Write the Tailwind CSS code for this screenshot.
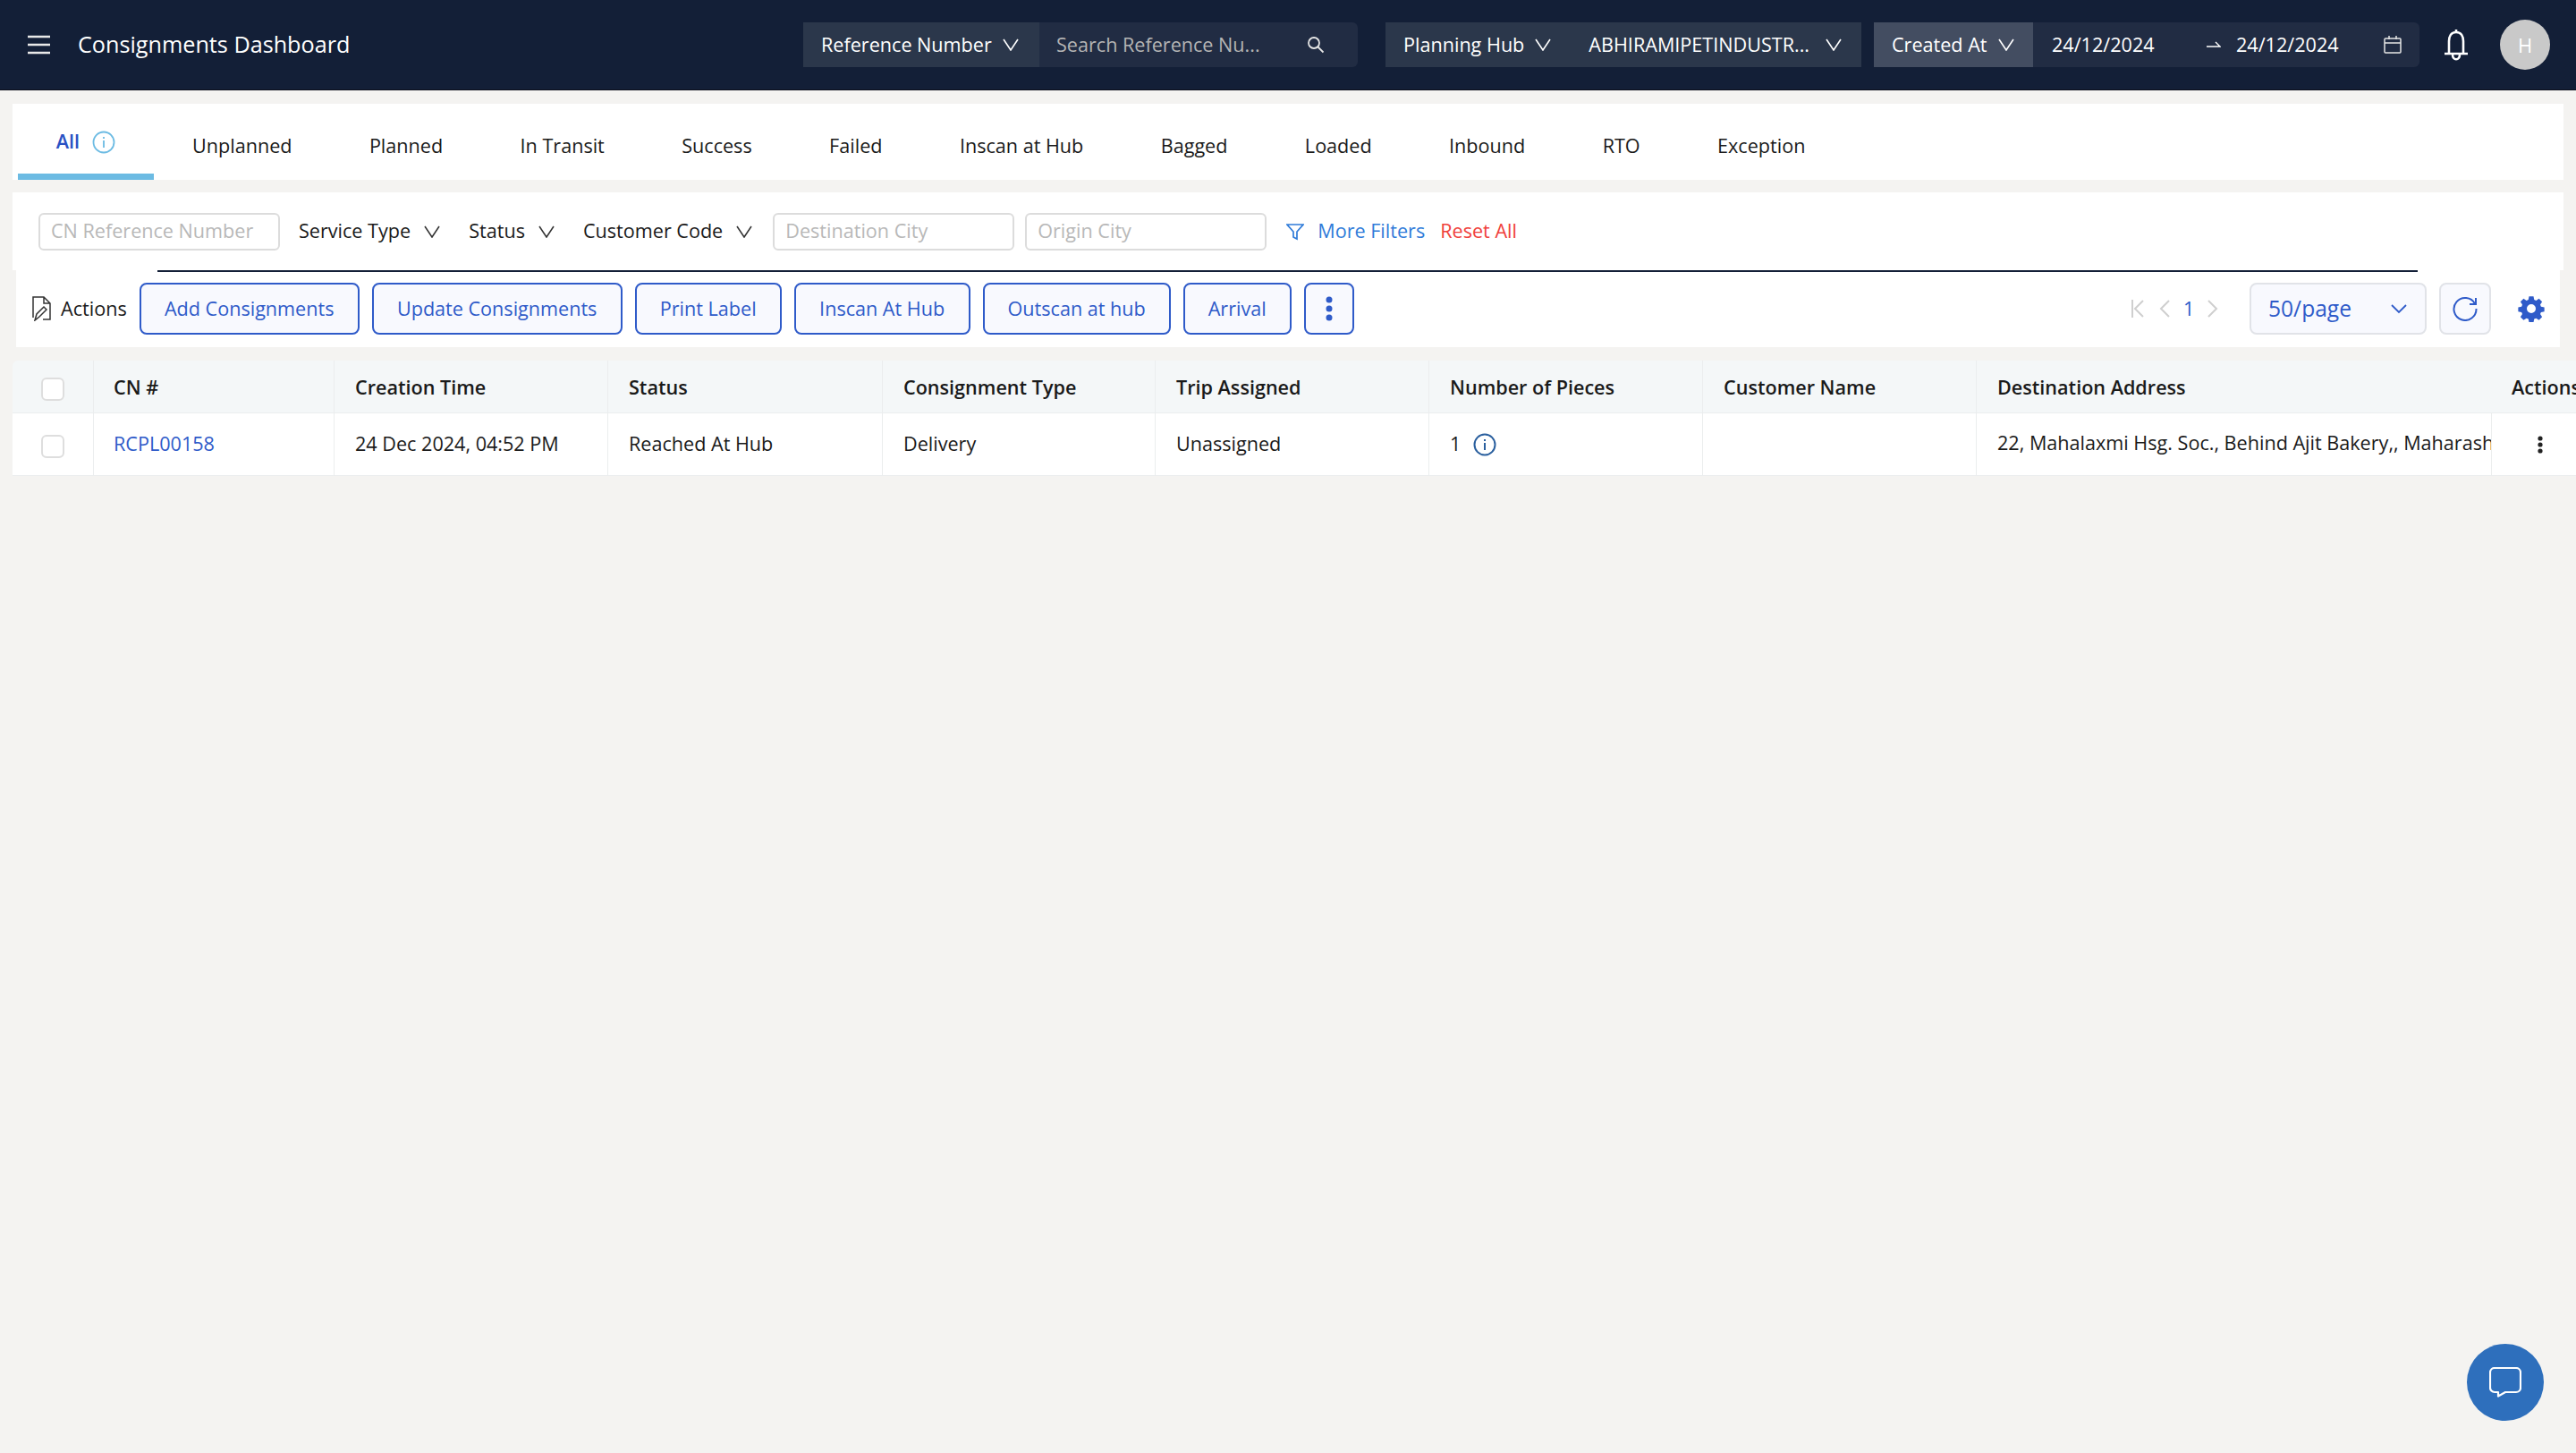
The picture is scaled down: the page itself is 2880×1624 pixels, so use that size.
<!DOCTYPE html>
<html lang="en">
<head>
<meta charset="UTF-8">
<title>Consignments Dashboard</title>
<script src="https://cdn.jsdelivr.net/npm/@tailwindcss/browser@4"></script>
</head>
<body class="bg-[#f4f3f1] font-['Open_Sans',sans-serif] text-[21.6px] text-[#1a1a1a] w-[2880px] h-[1624px] overflow-hidden relative">

<!-- top bar -->
<header class="h-[101px] bg-[#131f37] border-b border-[#0b0f1a] flex items-center text-white">
  <svg class="ml-[30px] w-[27px] h-[22px]" viewBox="0 0 27 22" fill="none" stroke="#e8e8e8" stroke-width="2.4"><path d="M1 2h25M1 11h25M1 20h25"/></svg>
  <h1 class="ml-[30px] w-[811px] text-[25.2px] leading-none whitespace-nowrap">Consignments Dashboard</h1>

  <div class="flex h-[50px] w-[620px]">
    <div class="w-[264px] bg-[#2b374b] flex items-center pl-[20px] gap-[12px] whitespace-nowrap">Reference Number
      <svg class="w-[18px] h-[14px]" viewBox="0 0 18 14" fill="none" stroke="#fff" stroke-width="1.6"><path d="M1 1l8 12 8-12"/></svg>
    </div>
    <div class="w-[356px] bg-[#212c43] rounded-r-[6px] flex items-center pl-[19px] text-[#b4b4b4] whitespace-nowrap">Search Reference Nu...
      <svg class="ml-[52px] w-[20px] h-[20px]" viewBox="0 0 20 20" fill="none" stroke="#e6e6e6" stroke-width="1.8"><circle cx="8" cy="8" r="6"/><path d="M12.5 12.5l6 6"/></svg>
    </div>
  </div>

  <div class="ml-[31px] flex items-center h-[50px] w-[532px] bg-[#2b374b] pl-[20px] whitespace-nowrap">
    <span>Planning Hub</span>
    <svg class="ml-[12px] w-[18px] h-[14px]" viewBox="0 0 18 14" fill="none" stroke="#fff" stroke-width="1.6"><path d="M1 1l8 12 8-12"/></svg>
    <span class="ml-[42px] w-[265px]">ABHIRAMIPETINDUSTR...</span>
    <svg class="w-[18px] h-[14px]" viewBox="0 0 18 14" fill="none" stroke="#fff" stroke-width="1.6"><path d="M1 1l8 12 8-12"/></svg>
  </div>

  <div class="ml-[14px] flex h-[50px] w-[610px]">
    <div class="w-[178px] bg-[#434d61] flex items-center pl-[20px] gap-[12px] whitespace-nowrap">Created At
      <svg class="w-[18px] h-[14px]" viewBox="0 0 18 14" fill="none" stroke="#fff" stroke-width="1.6"><path d="M1 1l8 12 8-12"/></svg>
    </div>
    <div class="w-[432px] bg-[#212c43] rounded-r-[6px] flex items-center pl-[21px]">
      <span class="w-[173px]">24/12/2024</span>
      <svg class="w-[16px] h-[8px]" viewBox="0 0 16 8" fill="none" stroke="#fff" stroke-width="1.4"><path d="M0 6h15L10 1"/></svg>
      <span class="ml-[17px] w-[165px]">24/12/2024</span>
      <svg class="w-[20px] h-[20px]" viewBox="0 0 20 20" fill="none" stroke="#e6e6e6" stroke-width="1.5"><rect x="1" y="3" width="18" height="16" rx="1"/><path d="M1 8h18M6 0v4M14 0v4"/></svg>
    </div>
  </div>

  <svg class="ml-[26px] w-[30px] h-[36px]" viewBox="0 0 30 36" fill="none" stroke="#fff" stroke-width="2.600"><path d="M15 4c-6 0-8 5-8 10v14H2h26H23V14c0-5-2-10-8-10zM15 1v3M11 29c0 7 8 7 8 0"/></svg>
  <div class="ml-[34px] w-[56px] h-[56px] rounded-full bg-[#c9c9c9] flex items-center justify-center text-[22px]">H</div>
</header>

<!-- status tabs -->
<nav class="ml-[14px] mt-[15px] w-[2852px] h-[85px] bg-white flex">
  <div class="ml-[6px] w-[152px] h-[85px] border-b-[7px] border-[#6cbbe3] flex items-center justify-center gap-[14px] pt-[7px]">
    <span class="font-semibold text-[#2a52c4]">All</span>
    <svg class="w-[26px] h-[26px]" viewBox="0 0 26 26" fill="none" stroke="#6cbbe3" stroke-width="1.800"><circle cx="13" cy="13" r="11.500"/><path d="M13 11v8M13 7v2"/></svg>
  </div>
  <div class="ml-[43px] flex gap-[86.4px] items-center h-[85px] pt-[9px] whitespace-nowrap">
    <span>Unplanned</span><span>Planned</span><span>In Transit</span><span>Success</span><span>Failed</span><span>Inscan at Hub</span><span>Bagged</span><span>Loaded</span><span>Inbound</span><span>RTO</span><span>Exception</span>
  </div>
</nav>

<!-- filters -->
<section class="ml-[14px] mt-[14px] w-[2852px] h-[87px] bg-white flex items-center pl-[29px] whitespace-nowrap">
  <div class="w-[270px] h-[42px] border-2 border-[#dcdcdc] rounded-[6px] flex items-center pl-[12px] text-[#b8b8b8]">CN Reference Number</div>
  <span class="ml-[21px]">Service Type</span>
  <svg class="ml-[15px] w-[18px] h-[14px]" viewBox="0 0 18 14" fill="none" stroke="#333" stroke-width="1.6"><path d="M1 1l8 12 8-12"/></svg>
  <span class="ml-[32px]">Status</span>
  <svg class="ml-[15px] w-[18px] h-[14px]" viewBox="0 0 18 14" fill="none" stroke="#333" stroke-width="1.6"><path d="M1 1l8 12 8-12"/></svg>
  <span class="ml-[32px]">Customer Code</span>
  <svg class="ml-[15px] w-[18px] h-[14px]" viewBox="0 0 18 14" fill="none" stroke="#333" stroke-width="1.6"><path d="M1 1l8 12 8-12"/></svg>
  <div class="ml-[23px] w-[270px] h-[42px] border-2 border-[#dcdcdc] rounded-[6px] flex items-center pl-[12px] text-[#b8b8b8]">Destination City</div>
  <div class="ml-[12px] w-[270px] h-[42px] border-2 border-[#dcdcdc] rounded-[6px] flex items-center pl-[12px] text-[#b8b8b8]">Origin City</div>
  <svg class="ml-[22px] w-[20px] h-[20px]" viewBox="0 0 20 20" fill="none" stroke="#2f7bd9" stroke-width="1.700"><path d="M1 2h18l-7 8v8l-4-2v-6z"/></svg>
  <span class="ml-[15px] text-[#2f7bd9]">More Filters</span>
  <span class="ml-[17px] text-[#f0413c]">Reset All</span>
</section>

<!-- actions -->
<section class="ml-[18px] w-[2844px] h-[86px] bg-white relative flex items-center whitespace-nowrap">
  <div class="absolute top-0 left-[158px] w-[2527px] h-[2px] bg-[#131f37]"></div>
  <svg class="ml-[18px] w-[22px] h-[28px]" viewBox="0 0 22 28" fill="none" stroke="#333" stroke-width="1.500"><path d="M1 24V1h12l7 7v18h-8M13 1v7h7M3 27l2-7 8-8 3 3-8 8z"/></svg>
  <span class="ml-[10px]">Actions</span>
  <div class="ml-[14px] flex gap-[14px]">
    <button class="h-[58px] w-[246px] border-2 border-[#2f5bc9] bg-[#f8f9fe] rounded-[8px] text-[#2f5bc9]">Add Consignments</button>
    <button class="h-[58px] w-[280px] border-2 border-[#2f5bc9] bg-[#f8f9fe] rounded-[8px] text-[#2f5bc9]">Update Consignments</button>
    <button class="h-[58px] w-[164px] border-2 border-[#2f5bc9] bg-[#f8f9fe] rounded-[8px] text-[#2f5bc9]">Print Label</button>
    <button class="h-[58px] w-[197px] border-2 border-[#2f5bc9] bg-[#f8f9fe] rounded-[8px] text-[#2f5bc9]">Inscan At Hub</button>
    <button class="h-[58px] w-[210px] border-2 border-[#2f5bc9] bg-[#f8f9fe] rounded-[8px] text-[#2f5bc9]">Outscan at hub</button>
    <button class="h-[58px] w-[121px] border-2 border-[#2f5bc9] bg-[#f8f9fe] rounded-[8px] text-[#2f5bc9]">Arrival</button>
    <button class="h-[58px] w-[56px] border-2 border-[#2f5bc9] bg-[#f8f9fe] rounded-[8px] flex items-center justify-center">
      <svg class="w-[8px] h-[28px]" viewBox="0 0 8 28" fill="#2f5bc9"><circle cx="4" cy="4" r="3.500"/><circle cx="4" cy="14" r="3.500"/><circle cx="4" cy="24" r="3.500"/></svg>
    </button>
  </div>
  <div class="ml-auto flex items-center">
    <svg class="w-[16px] h-[20px]" viewBox="0 0 16 20" fill="none" stroke="#cfcfcf" stroke-width="2"><path d="M2 0v20M14 1L5 10l9 9"/></svg>
    <svg class="ml-[16px] w-[12px] h-[20px]" viewBox="0 0 12 20" fill="none" stroke="#cfcfcf" stroke-width="2"><path d="M11 1L2 10l9 9"/></svg>
    <span class="ml-[15px] w-[12px] text-[#2f5bc9]">1</span>
    <svg class="ml-[15px] w-[12px] h-[20px]" viewBox="0 0 12 20" fill="none" stroke="#cfcfcf" stroke-width="2"><path d="M1 1l9 9-9 9"/></svg>
    <div class="ml-[35px] w-[198px] h-[58px] border-2 border-[#e1e3e8] bg-[#f8f9fe] rounded-[8px] flex items-center pl-[19px] text-[24.6px] text-[#2f5bc9]">50/page
      <svg class="ml-[44px] w-[18px] h-[11px]" viewBox="0 0 18 11" fill="none" stroke="#2f5bc9" stroke-width="1.800"><path d="M1 1l8 8 8-8"/></svg>
    </div>
    <div class="ml-[14px] w-[58px] h-[58px] border-2 border-[#e1e3e8] bg-[#f8f9fe] rounded-[8px] flex items-center justify-center">
      <svg class="w-[28px] h-[28px]" viewBox="0 0 28 28" fill="none" stroke="#2f5bc9" stroke-width="2"><path d="M25 8.500A12.500 12.500 0 1 0 26.500 14M26 2v7h-7"/></svg>
    </div>
    <svg class="ml-[30px] mr-[17px] w-[30px] h-[30px]" viewBox="0 0 24 24" fill="#2f5bc9"><path fill-rule="evenodd" d="M14 1l.6 3 1.700.7 2.600-1.700 2.800 2.800-1.700 2.600.7 1.700 3 .6v3.800l-3 .6-.7 1.700 1.700 2.600-2.800 2.800-2.600-1.700-1.700.7-.6 3h-4l-.6-3-1.700-.7-2.600 1.700-2.800-2.800 1.700-2.600-.7-1.700-3-.6v-3.800l3-.6.7-1.700L2.300 5.800l2.800-2.800 2.600 1.700 1.700-.7.600-3zM12 8a4 4 0 1 0 0 8 4 4 0 0 0 0-8z"/></svg>
  </div>
</section>

<!-- table -->
<div class="ml-[14px] mt-[15px] w-[2866px] h-[130px] overflow-hidden whitespace-nowrap">
  <div class="grid grid-cols-[91px_269px_306px_307px_305px_306px_306px_306px_576px_100px] h-[59px] bg-[#f4f7f8] font-semibold rounded-tl-[6px] border-b border-[#ebedee]">
    <div class="flex items-center justify-center border-r border-[#ebedee] pt-[5px]"><div class="w-[26px] h-[26px] rounded-[6px] border-2 border-[#dedede] bg-white"></div></div>
    <div class="flex items-center pl-[22px] pt-[2px] border-r border-[#ebedee]">CN #</div>
    <div class="flex items-center pl-[23px] pt-[2px] border-r border-[#ebedee]">Creation Time</div>
    <div class="flex items-center pl-[23px] pt-[2px] border-r border-[#ebedee]">Status</div>
    <div class="flex items-center pl-[23px] pt-[2px] border-r border-[#ebedee]">Consignment Type</div>
    <div class="flex items-center pl-[23px] pt-[2px] border-r border-[#ebedee]">Trip Assigned</div>
    <div class="flex items-center pl-[23px] pt-[2px] border-r border-[#ebedee]">Number of Pieces</div>
    <div class="flex items-center pl-[23px] pt-[2px] border-r border-[#ebedee]">Customer Name</div>
    <div class="flex items-center pl-[23px] pt-[2px]">Destination Address</div>
    <div class="flex items-center pl-[22px] pt-[2px]">Actions</div>
  </div>
  <div class="grid grid-cols-[91px_269px_306px_307px_305px_306px_306px_306px_576px_100px] h-[70px] bg-white border-b border-[#ebedee]">
    <div class="flex items-center justify-center border-r border-[#ebedee] pt-[4px]"><div class="w-[26px] h-[26px] rounded-[6px] border-2 border-[#dedede] bg-white"></div></div>
    <div class="flex items-center pl-[22px] border-r border-[#ebedee] text-[#2f5bc9]">RCPL00158</div>
    <div class="flex items-center pl-[23px] border-r border-[#ebedee]">24 Dec 2024, 04:52 PM</div>
    <div class="flex items-center pl-[23px] border-r border-[#ebedee]">Reached At Hub</div>
    <div class="flex items-center pl-[23px] border-r border-[#ebedee]">Delivery</div>
    <div class="flex items-center pl-[23px] border-r border-[#ebedee]">Unassigned</div>
    <div class="flex items-center pl-[23px] border-r border-[#ebedee]">1
      <svg class="ml-[14px] w-[26px] h-[26px]" viewBox="0 0 26 26" fill="none" stroke="#2a5f9e" stroke-width="2"><circle cx="13" cy="13" r="11.500"/><path d="M13 11v8M13 7v2"/></svg>
    </div>
    <div class="border-r border-[#ebedee]"></div>
    <div class="flex items-center pl-[23px] pb-[2px] border-r border-[#ebedee] overflow-hidden"><span>22, Mahalaxmi Hsg. Soc., Behind Ajit Bakery,, Maharashtra</span></div>
    <div class="flex items-center pl-[50px]">
      <svg class="w-[8px] h-[20px]" viewBox="0 0 8 20" fill="#222"><circle cx="4" cy="3" r="2.600"/><circle cx="4" cy="10" r="2.600"/><circle cx="4" cy="17" r="2.600"/></svg>
    </div>
  </div>
</div>

<!-- chat launcher -->
<div class="absolute left-[2758px] top-[1502px] w-[86px] h-[86px] rounded-full bg-[#2e6fbc] flex items-center justify-center">
  <svg class="w-[36px] h-[34px]" viewBox="0 0 36 34" fill="none" stroke="#fff" stroke-width="2.200" stroke-linejoin="round"><path d="M6 1h24a5 5 0 0 1 5 5v17a5 5 0 0 1-5 5H18l-8 4.500V28H6a5 5 0 0 1-5-5V6a5 5 0 0 1 5-5z"/></svg>
</div>
</body>
</html>
